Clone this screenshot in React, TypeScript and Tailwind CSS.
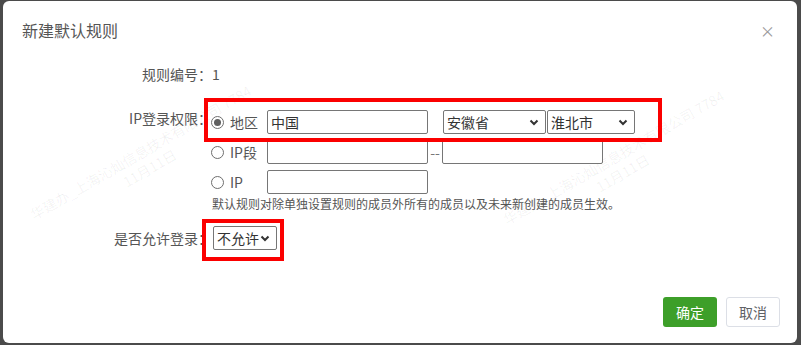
import React from "react";

const font = { fontFamily: '"Noto Sans CJK SC", "Liberation Sans", sans-serif' };

const Radio = ({ checked }: { checked?: boolean }) => (
  <span className="flex h-[13px] w-[13px] items-center justify-center rounded-full border border-[#6e6e6e] bg-white">
    {checked && <span className="h-[7px] w-[7px] rounded-full bg-[#5f5f5f]" />}
  </span>
);

const Chevron = () => (
  <svg width="10" height="7" viewBox="0 0 10 7" className="shrink-0">
    <polyline points="1.5,1.5 5,5 8.5,1.5" fill="none" stroke="#333" strokeWidth="2" />
  </svg>
);

const Select = ({ value, className }: { value: string; className: string }) => (
  <div
    className={`flex h-[24px] items-center justify-between whitespace-nowrap rounded-[2px] border border-[#767676] bg-white pl-[3px] pr-[6px] text-[14px] text-[#333] ${className}`}
  >
    <span>{value}</span>
    <Chevron />
  </div>
);

const Input = ({ value = "", className = "w-[161px]" }: { value?: string; className?: string }) => (
  <div className={`flex h-[24px] items-center rounded-[2px] border border-[#767676] bg-white px-[3px] text-[14px] text-[#333] ${className}`}>
    {value}
  </div>
);

const Watermark = ({ className }: { className: string }) => (
  <div
    className={`pointer-events-none absolute h-[36px] w-[300px] -rotate-[30deg] whitespace-nowrap text-center text-[14px] leading-[18px] text-black/[0.06] ${className}`}
  >
    <div>华建办_上海沁灿信息技术有限公司 7784</div>
    <div>11月11日</div>
  </div>
);

export default function App() {
  return (
    <div className="h-[345px] w-[801px] overflow-hidden bg-[#4b4b4b] pl-[3px] pt-[1px]" style={font}>
      <div className="relative flex h-[342px] w-[794px] flex-col overflow-hidden rounded-[6px] bg-white">
        <Watermark className="left-[-8px] top-[141px]" />
        <Watermark className="left-[465px] top-[146px]" />

        {/* header */}
        <div className="relative flex h-[58px] items-center justify-between pl-[19px] pr-[22px]">
          <h1 className="text-[16px] text-[#555]">新建默认规则</h1>
          <span className="text-[15px] leading-none text-[#999]">×</span>
        </div>

        {/* body */}
        <div className="relative flex flex-col text-[14px] text-[#555]">
          <div className="flex h-[30px] items-center">
            <span className="w-[209px] text-right">规则编号：</span>
            <span>1</span>
          </div>

          <div className="mt-[21px] flex">
            <span className="mt-[-2px] w-[209px] self-start text-right leading-[20px]">IP登录权限：</span>
            <div className="flex flex-col gap-[6px]">
              <div className="flex h-[24px] items-center">
                <span className="ml-[-1px] w-[19px]"><Radio checked /></span>
                <span className="w-[37px]">地区</span>
                <Input value="中国" />
                <Select value="安徽省" className="ml-[15px] w-[103px]" />
                <Select value="淮北市" className="ml-[1px] w-[88px]" />
              </div>
              <div className="flex h-[24px] items-center">
                <span className="ml-[-1px] w-[19px]"><Radio /></span>
                <span className="w-[37px]">IP段</span>
                <Input />
                <span className="w-[14px] text-center text-[#777]">--</span>
                <Input />
              </div>
              <div className="flex h-[24px] items-center">
                <span className="ml-[-1px] w-[19px]"><Radio /></span>
                <span className="w-[37px]">IP</span>
                <Input />
              </div>
              <p className="mt-[-4px] text-[12px] leading-[16px] text-[#555]">
                默认规则对除单独设置规则的成员外所有的成员以及未来新创建的成员生效。
              </p>
            </div>
          </div>

          <div className="mt-[14px] flex h-[24px] items-center">
            <span className="w-[209px] text-right">是否允许登录：</span>
            <Select value="不允许" className="ml-[1px] w-[64px] pr-[2px]" />
          </div>
        </div>

        {/* footer */}
        <div className="relative mt-auto flex justify-end gap-[9px] pb-[16px] pr-[17px]">
          <button className="h-[30px] w-[54px] rounded-[3px] bg-[#3d9f29] text-[14px] text-white">确定</button>
          <button className="h-[30px] w-[54px] rounded-[3px] border border-[#dcdfe6] bg-white text-[14px] text-[#606266]">
            取消
          </button>
        </div>

        {/* annotation boxes */}
        <div className="pointer-events-none absolute left-[201px] top-[97px] h-[44px] w-[458px] border-4 border-[#fb0000]" />
        <div className="pointer-events-none absolute left-[199px] top-[218px] h-[42px] w-[82px] border-4 border-[#fb0000]" />
      </div>
    </div>
  );
}
